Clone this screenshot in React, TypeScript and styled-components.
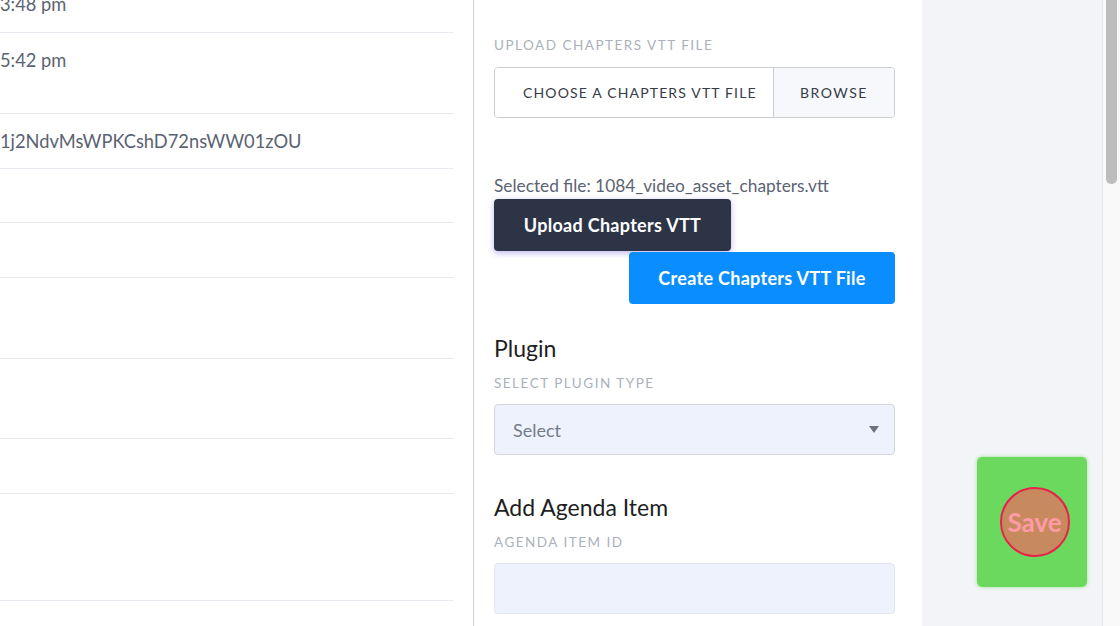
import React from 'react';
import styled, {createGlobalStyle} from 'styled-components';

const GlobalStyle = createGlobalStyle`
    html, body {
        margin: 0;
        padding: 0;
        height: 100%;
        overflow: hidden;
    }
    body {
        font-family: Lato, 'Open Sans', sans-serif;
        background: #ffffff;
    }
    #root {
        height: 100%;
    }
`;

const Page = styled.div`
    display: flex;
    height: 626px;
    overflow: hidden;
`;

const TableColumn = styled.div`
    width: 454px;
    flex-shrink: 0;
    display: flex;
    flex-direction: column;
    margin-top: -23px;
    margin-right: 19px;
`;

const Row = styled.div<{height: number}>`
    height: ${({height}) => height}px;
    flex-shrink: 0;
    border-bottom: 1px solid #e8ebef;
    padding-top: 15px;
    box-sizing: border-box;
    font-size: 18.3px;
    line-height: 24px;
    color: #5b6372;
    white-space: nowrap;
    overflow: hidden;
`;

const FormPanel = styled.div`
    width: 449px;
    flex-shrink: 0;
    border-left: 1px solid #cfd1d4;
    box-sizing: border-box;
    padding: 36px 27px 0 20px;
    display: flex;
    flex-direction: column;
`;

const Label = styled.div<{top?: number}>`
    margin-top: ${({top}) => top ?? 0}px;
    font-size: 13.5px;
    line-height: 18px;
    letter-spacing: 1.5px;
    text-transform: uppercase;
    color: #aab1bc;
`;

const FileBox = styled.div`
    margin-top: 13px;
    height: 51px;
    display: flex;
    border: 1px solid #c9ccd1;
    border-radius: 4px;
    box-sizing: border-box;
    overflow: hidden;
`;

const FileName = styled.div`
    flex: 1;
    display: flex;
    align-items: center;
    padding-left: 28px;
    font-size: 14px;
    letter-spacing: 1.15px;
    color: #363b46;
    background: #ffffff;
`;

const Browse = styled.div`
    width: 120px;
    border-left: 1px solid #c9ccd1;
    display: flex;
    align-items: center;
    justify-content: center;
    font-size: 14px;
    letter-spacing: 1.5px;
    color: #363b46;
    background: #f7f8fc;
`;

const Selected = styled.div`
    margin-top: 58px;
    font-size: 17.3px;
    line-height: 20px;
    color: #5b6372;
`;

const ButtonStack = styled.div`
    display: flex;
    flex-direction: column;
    margin-top: 3px;
`;

const ActionButton = styled.button<{variant: 'dark' | 'blue'}>`
    height: 52px;
    border: none;
    border-radius: 4px;
    padding: 0;
    white-space: nowrap;
    font-family: Lato, 'Open Sans', sans-serif;
    font-size: 18px;
    font-weight: 700;
    letter-spacing: 0.3px;
    color: #ffffff;
    background: ${({variant}) => variant === 'dark' ? '#2c3446' : '#0a8dff'};
    box-shadow: ${({variant}) => variant === 'dark' ? '0 2px 6px rgba(110, 90, 220, 0.45)' : 'none'};
    align-self: ${({variant}) => variant === 'dark' ? 'flex-start' : 'flex-end'};
    width: ${({variant}) => variant === 'dark' ? '237px' : '266px'};
    margin-top: ${({variant}) => variant === 'dark' ? '0' : '1px'};
`;

const Heading = styled.h3<{top: number}>`
    margin: ${({top}) => top}px 0 0;
    font-size: 23px;
    line-height: 28px;
    font-weight: 400;
    color: #1e1f22;
`;

const SelectBox = styled.div`
    margin-top: 12px;
    height: 51px;
    display: flex;
    align-items: center;
    justify-content: space-between;
    padding: 0 15px 0 18px;
    box-sizing: border-box;
    background: #eef2fd;
    border: 1px solid #d2d6dd;
    border-radius: 4px;
    font-size: 18px;
    color: #747c88;
`;

const Caret = styled.span`
    width: 0;
    height: 0;
    border-left: 5.5px solid transparent;
    border-right: 5.5px solid transparent;
    border-top: 7px solid #6d7380;
`;

const TextInput = styled.div`
    margin-top: 12px;
    height: 51px;
    box-sizing: border-box;
    background: #eef2fd;
    border: 1px solid #e0e5ef;
    border-radius: 4px;
`;

const Side = styled.div`
    flex: 1;
    background: #f3f4f8;
    display: flex;
    flex-direction: column;
    align-items: flex-end;
    padding: 457px 15px 0 0;
`;

const SaveCard = styled.div`
    width: 110px;
    height: 130px;
    border-radius: 5px;
    background: #6bd95e;
    box-shadow: 0 0 4px rgba(107, 217, 94, 0.6);
    display: flex;
    align-items: center;
    justify-content: center;
`;

const SaveCircle = styled.button`
    width: 70px;
    height: 70px;
    margin-left: 5px;
    border-radius: 50%;
    border: 2px solid #e8214c;
    background: #c78a5f;
    padding: 0;
    display: flex;
    align-items: center;
    justify-content: center;
    font-family: Lato, 'Open Sans', sans-serif;
    font-size: 26px;
    font-weight: 700;
    color: #ff9ba7;
    overflow: visible;
    white-space: nowrap;
`;

const ScrollTrack = styled.div`
    width: 18px;
    flex-shrink: 0;
    background: #f9f9f9;
    border-left: 1px solid #e6e6e8;
    box-sizing: border-box;
    padding: 0 3px 0 3px;
`;

const ScrollThumb = styled.div`
    height: 190px;
    margin-top: -6px;
    border-radius: 5px;
    background: #bdbdbd;
`;

const rows: {height: number; text?: string}[] = [
	{height: 56, text: '3:48 pm'},
	{height: 81, text: '5:42 pm'},
	{height: 55, text: '1j2NdvMsWPKCshD72nsWW01zOU'},
	{height: 54},
	{height: 55},
	{height: 81},
	{height: 80},
	{height: 55},
	{height: 107},
	{height: 60},
];

export default function App() {
	return (
		<>
			<GlobalStyle />
			<Page>
				<TableColumn>
					{rows.map((row, i) => (
						<Row key={i} height={row.height}>{row.text}</Row>
					))}
				</TableColumn>
				<FormPanel>
					<Label>Upload Chapters VTT File</Label>
					<FileBox>
						<FileName>CHOOSE A CHAPTERS VTT FILE</FileName>
						<Browse>BROWSE</Browse>
					</FileBox>
					<Selected>Selected file: 1084_video_asset_chapters.vtt</Selected>
					<ButtonStack>
						<ActionButton variant="dark">Upload Chapters VTT</ActionButton>
						<ActionButton variant="blue">Create Chapters VTT File</ActionButton>
					</ButtonStack>
					<Heading top={30}>Plugin</Heading>
					<Label top={12}>Select Plugin Type</Label>
					<SelectBox>
						<span>Select</span>
						<Caret />
					</SelectBox>
					<Heading top={38}>Add Agenda Item</Heading>
					<Label top={12}>Agenda Item ID</Label>
					<TextInput />
				</FormPanel>
				<Side>
					<SaveCard>
						<SaveCircle>Save</SaveCircle>
					</SaveCard>
				</Side>
				<ScrollTrack>
					<ScrollThumb />
				</ScrollTrack>
			</Page>
		</>
	);
}
